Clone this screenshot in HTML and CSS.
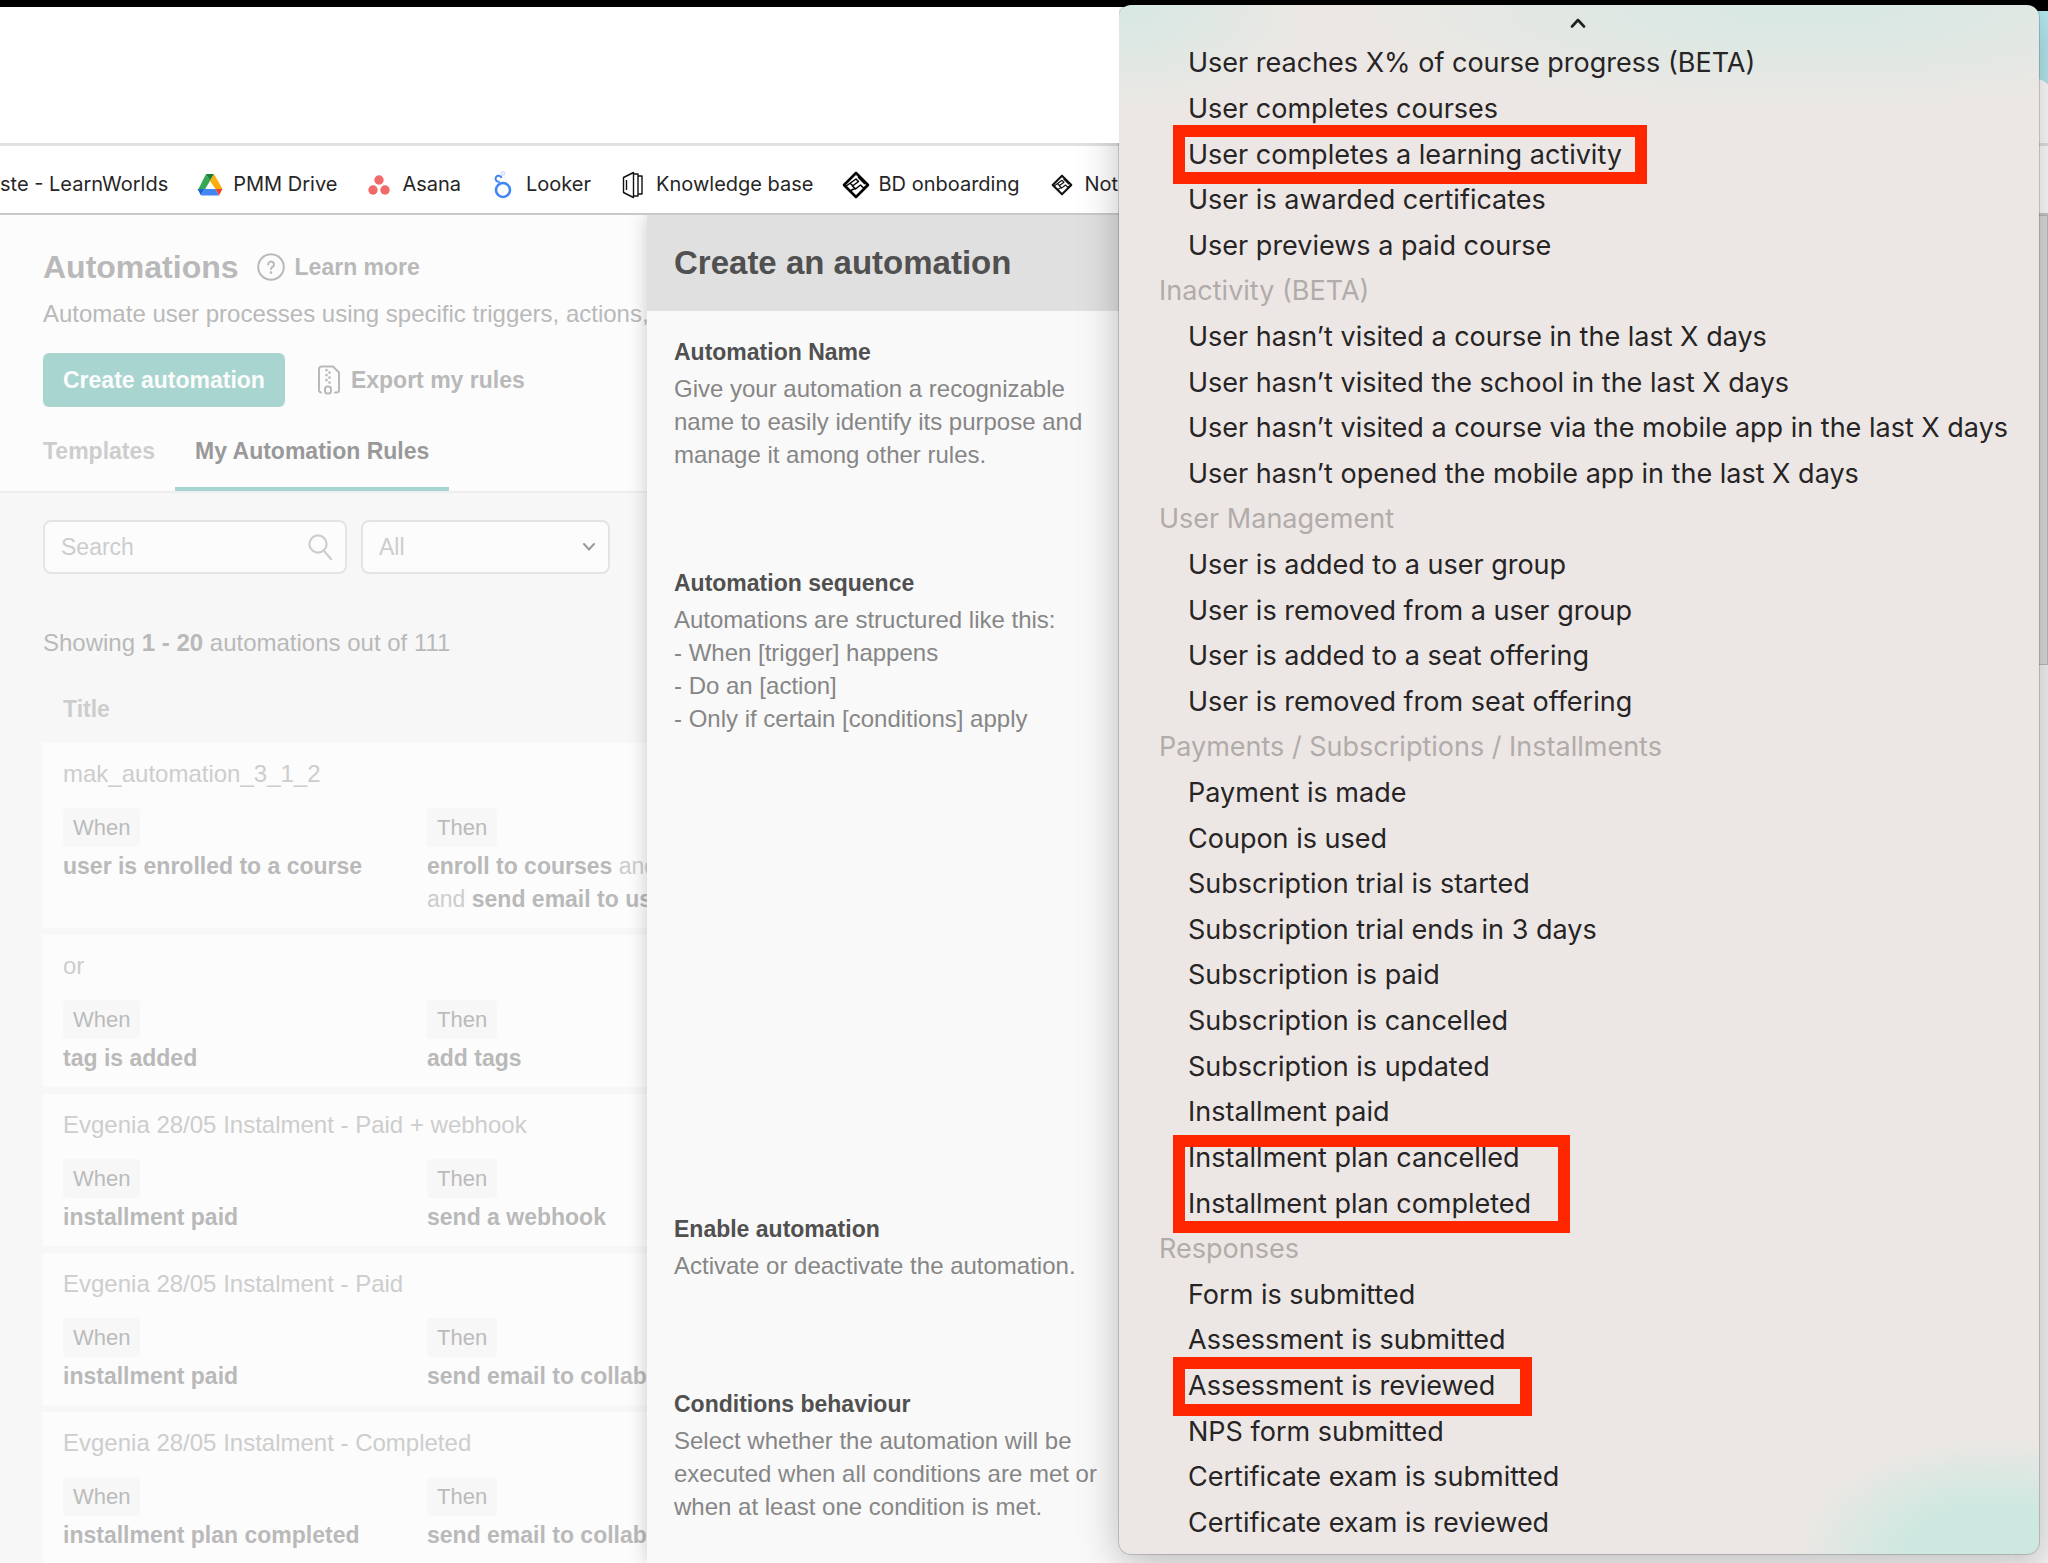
FILE: index.html
```html
<!DOCTYPE html>
<html lang="en">
<head>
<meta charset="utf-8">
<meta name="viewport" content="width=device-width, initial-scale=1">
<title>Automations</title>
<link rel="stylesheet" href="styles.css">
</head>
<body>
<div class="screen">
  <div class="bezel"></div>
  <div class="desktop-edge"></div>
  <div class="toolbar"></div>
  <nav class="bookmarks" aria-label="Bookmarks">
    <a class="bookmark" href="#">ste - LearnWorlds</a>
    <a class="bookmark" href="#">
      <svg class="bookmark-icon" viewBox="0 0 28 28" aria-hidden="true">
        <path d="M10 3l4 7-5.500 9H2z" fill="#34a853"/>
        <path d="M10 3h8l-4 7z" fill="#188038"/>
        <path d="M18 3l8.500 15h-7L14 10z" fill="#fbad0c"/>
        <path d="M1.500 18h7l-3.500 6.500z" fill="#1967d2"/>
        <path d="M8.500 18h11l3.500 6.500H5z" fill="#4285f4"/>
        <path d="M19.500 18h7L23 24.500z" fill="#ea4335"/>
      </svg>
      PMM Drive</a>
    <a class="bookmark" href="#">
      <svg class="bookmark-icon" viewBox="0 0 28 28" aria-hidden="true" fill="#f06a6a">
        <circle cx="14" cy="9" r="4.700"/><circle cx="8" cy="19" r="4.700"/><circle cx="20" cy="19" r="4.700"/>
      </svg>
      Asana</a>
    <a class="bookmark" href="#">
      <svg class="bookmark-icon" viewBox="0 0 28 28" aria-hidden="true" fill="none" stroke="#4285f4">
        <circle cx="14" cy="19" r="7" stroke-width="2.600"/>
        <path d="M10.500 10.500A3 3 0 1 1 12.500 7" stroke-width="2"/>
        <circle cx="14" cy="2.500" r="1.600" stroke="#c9dcfb" stroke-width="1.400"/>
      </svg>
      Looker</a>
    <a class="bookmark" href="#">
      <svg class="bookmark-icon" viewBox="0 0 28 28" aria-hidden="true" fill="none" stroke="#111" stroke-width="1.400" stroke-linejoin="round">
        <path d="M4.500 6.500l10-5v25l-10-5z"/><path d="M14.500 3h4.500v22h-4.500M19 5h4v18h-4"/><path d="M7.500 9v10"/>
      </svg>
      Knowledge base</a>
    <a class="bookmark" href="#">
      <svg class="bookmark-icon" viewBox="0 0 28 28" aria-hidden="true" fill="none" stroke="#000" stroke-width="2.600" stroke-linejoin="round">
        <path d="M14 2l12 12-12 12L2 14z"/>
        <path d="M3.500 15.500L14 8l2.500 2.500-6 4.500 3 3 5-4 3 3 4-3M16 6l7 7M8 12l3 3M8 20l5.500-3" stroke-width="1.500"/>
      </svg>
      BD onboarding</a>
    <a class="bookmark" href="#">
      <svg class="bookmark-icon" viewBox="-4 -4 36 36" aria-hidden="true" fill="none" stroke="#111" stroke-width="2.600" stroke-linejoin="round">
        <path d="M14 2l12 12-12 12L2 14z"/>
        <path d="M3.500 15.500L14 8l2.500 2.500-6 4.500 3 3 5-4 3 3 4-3M16 6l7 7M8 12l3 3M8 20l5.500-3" stroke-width="1.500"/>
      </svg>
      Not</a>
  </nav>

  <div class="workspace">
    <main class="page">
      <header class="page-head">
        <div class="title-row">
          <h1>Automations</h1>
          <a class="learn" href="#">
            <svg class="learn-icon" viewBox="0 0 28 28" aria-hidden="true" fill="none" stroke="currentColor" stroke-width="2" stroke-linecap="round">
              <circle cx="14" cy="14" r="12.800"/>
              <path d="M11.200 11.500a2.900 2.900 0 1 1 4.500 2.400c-1 .7-1.700 1-1.700 2.100"/><path d="M14 19.500v.1" stroke-width="2.600"/>
            </svg>
            Learn more</a>
        </div>
        <p class="intro">Automate user processes using specific triggers, actions,</p>
        <div class="actions">
          <button class="primary" type="button">Create automation</button>
          <button class="export" type="button">
            <svg class="export-icon" viewBox="0 0 24 30" aria-hidden="true" fill="none" stroke="currentColor" stroke-width="2" stroke-linecap="round" stroke-linejoin="round">
              <path d="M4 27.500a2.500 2.500 0 0 1-2-2.500V4a2.500 2.500 0 0 1 2.500-2.500H16l6 6V25a2.500 2.500 0 0 1-2.500 2.500H18"/>
              <rect x="8" y="21.500" width="6" height="7" rx="2.500"/>
              <path d="M9.500 5v.1M12.500 7.500v.1M9.500 10v.1M12.500 12.500v.1M9.500 15v.1M12.500 17.500v.1" stroke-width="2.600"/>
            </svg>
            Export my rules</button>
        </div>
        <nav class="tabs" aria-label="Sections">
          <a class="tab" href="#">Templates</a>
          <a class="tab tab-current" href="#" aria-current="page">My Automation Rules</a>
        </nav>
      </header>

      <section class="rules">
        <form class="filters">
          <label class="search">
            <input type="search" placeholder="Search" aria-label="Search">
            <svg class="search-icon" viewBox="0 0 24 28" aria-hidden="true" fill="none" stroke="currentColor" stroke-width="2.200" stroke-linecap="round">
              <circle cx="10" cy="11" r="8.600"/><path d="M16 18l7 8"/>
            </svg>
          </label>
          <label class="filter">
            <select aria-label="Filter"><option>All</option></select>
            <svg class="filter-icon" viewBox="0 0 12 8" aria-hidden="true" fill="none" stroke="currentColor" stroke-width="2" stroke-linecap="round"><path d="M1 1l5 5.500L11 1"/></svg>
          </label>
        </form>
        <p class="count">Showing <b>1 - 20</b> automations out of 111</p>
        <table class="rule-table">
          <thead><tr><th scope="col">Title</th></tr></thead>
          <tbody>
            <tr><td><span class="rule-name">mak_automation_3_1_2</span>
              <div class="rule-parts">
                <div><span class="tag">When</span><p class="step"><b>user is enrolled to a course</b></p></div>
                <div><span class="tag">Then</span><p class="step"><b>enroll to courses</b> and<br>and <b>send email to us</b></p></div>
              </div></td></tr>
            <tr><td><span class="rule-name">or</span>
              <div class="rule-parts">
                <div><span class="tag">When</span><p class="step"><b>tag is added</b></p></div>
                <div><span class="tag">Then</span><p class="step"><b>add tags</b></p></div>
              </div></td></tr>
            <tr><td><span class="rule-name">Evgenia 28/05 Instalment - Paid + webhook</span>
              <div class="rule-parts">
                <div><span class="tag">When</span><p class="step"><b>installment paid</b></p></div>
                <div><span class="tag">Then</span><p class="step"><b>send a webhook</b></p></div>
              </div></td></tr>
            <tr><td><span class="rule-name">Evgenia 28/05 Instalment - Paid</span>
              <div class="rule-parts">
                <div><span class="tag">When</span><p class="step"><b>installment paid</b></p></div>
                <div><span class="tag">Then</span><p class="step"><b>send email to collab</b></p></div>
              </div></td></tr>
            <tr><td><span class="rule-name">Evgenia 28/05 Instalment - Completed</span>
              <div class="rule-parts">
                <div><span class="tag">When</span><p class="step"><b>installment plan completed</b></p></div>
                <div><span class="tag">Then</span><p class="step"><b>send email to collab</b></p></div>
              </div></td></tr>
          </tbody>
        </table>
      </section>
    </main>

    <aside class="drawer">
      <header class="drawer-head"><h2>Create an automation</h2></header>
      <div class="drawer-body">
        <section class="field field-name">
          <h3>Automation Name</h3>
          <p>Give your automation a recognizable name to easily identify its purpose and manage it among other rules.</p>
        </section>
        <section class="field field-sequence">
          <h3>Automation sequence</h3>
          <p>Automations are structured like this:<br>- When [trigger] happens<br>- Do an [action]<br>- Only if certain [conditions] apply</p>
        </section>
        <section class="field field-enable">
          <h3>Enable automation</h3>
          <p>Activate or deactivate the automation.</p>
        </section>
        <section class="field">
          <h3>Conditions behaviour</h3>
          <p>Select whether the automation will be executed when all conditions are met or when at least one condition is met.</p>
        </section>
      </div>
    </aside>
    <div class="scroll-track"><div class="scroll-thumb"></div></div>
  </div>

  <div class="menu">
    <div class="menu-more">
      <svg class="menu-chevron" viewBox="0 0 16 10" aria-hidden="true" fill="none" stroke="#222" stroke-width="2.600" stroke-linecap="round" stroke-linejoin="round"><path d="M2 8.500L8 2l6 6.500"/></svg>
    </div>
    <ul class="menu-list" role="listbox" aria-label="Trigger">
      <li role="option">User reaches X% of course progress (BETA)</li>
      <li role="option">User completes courses</li>
      <li role="option">User completes a learning activity<span class="mark mark-activity"></span></li>
      <li role="option">User is awarded certificates</li>
      <li role="option">User previews a paid course</li>
      <li class="menu-group" role="presentation">Inactivity (BETA)</li>
      <li role="option">User hasn’t visited a course in the last X days</li>
      <li role="option">User hasn’t visited the school in the last X days</li>
      <li role="option">User hasn’t visited a course via the mobile app in the last X days</li>
      <li role="option">User hasn’t opened the mobile app in the last X days</li>
      <li class="menu-group" role="presentation">User Management</li>
      <li role="option">User is added to a user group</li>
      <li role="option">User is removed from a user group</li>
      <li role="option">User is added to a seat offering</li>
      <li role="option">User is removed from seat offering</li>
      <li class="menu-group" role="presentation">Payments / Subscriptions / Installments</li>
      <li role="option">Payment is made</li>
      <li role="option">Coupon is used</li>
      <li role="option">Subscription trial is started</li>
      <li role="option">Subscription trial ends in 3 days</li>
      <li role="option">Subscription is paid</li>
      <li role="option">Subscription is cancelled</li>
      <li role="option">Subscription is updated</li>
      <li role="option">Installment paid</li>
      <li role="option">Installment plan cancelled<span class="mark mark-plans"></span></li>
      <li role="option">Installment plan completed</li>
      <li class="menu-group" role="presentation">Responses</li>
      <li role="option">Form is submitted</li>
      <li role="option">Assessment is submitted</li>
      <li role="option">Assessment is reviewed<span class="mark mark-reviewed"></span></li>
      <li role="option">NPS form submitted</li>
      <li role="option">Certificate exam is submitted</li>
      <li role="option">Certificate exam is reviewed</li>
    </ul>
  </div>
</div>
</body>
</html>
```

FILE: styles.css
```css
* { box-sizing: border-box; }

body {
  margin: 0;
  font-family: "Liberation Sans", Arial, sans-serif;
  font-size: 24px;
  line-height: 33px;
  color: #868686;
}

h1, h2, h3, p, ul { margin: 0; padding: 0; }
a { color: inherit; text-decoration: none; }
svg { flex: none; display: block; }
button, input, select { font: inherit; color: inherit; }

.screen {
  position: relative;
  height: 100vh;
  overflow: hidden;
  display: flex;
  flex-direction: column;
  background: #fff;
}

/* Browser chrome */
.bezel { flex: none; height: 7px; background: #000; }

.toolbar {
  flex: none;
  position: relative;
  z-index: 3;
  width: calc(100% - 929px);
  height: 136px;
  background: #fff;
}

.desktop-edge {
  position: absolute;
  top: 0;
  right: 0;
  width: 60px;
  height: 144px;
  border-top: 11px solid #000;
  background: #b4e8f0;
  overflow: hidden;
}
.desktop-edge::after {
  content: "";
  position: absolute;
  inset: 68px -4px 0 0;
  border-top-right-radius: 16px;
  background: #fff;
}

.bookmarks {
  flex: none;
  position: relative;
  display: flex;
  align-items: center;
  gap: 28px;
  height: 72px;
  padding-top: 10px;
  border-top: 3px solid #e1e1e1;
  border-bottom: 2px solid #c9c9c9;
  background: #fff;
  font-family: Inter, sans-serif;
  font-size: 20px;
  color: #262626;
  white-space: nowrap;
}

.bookmark { display: flex; align-items: center; gap: 9px; }
.bookmark-icon { width: 28px; height: 28px; }

.workspace {
  flex: 1;
  min-height: 0;
  display: grid;
  grid-template-columns: minmax(0, 647px) minmax(0, 1fr) 33px;
}

/* Automations page, faded behind the drawer */
.page {
  min-width: 0;
  overflow: hidden;
  background: #f7f7f7;
  color: #b9b9b9;
  white-space: nowrap;
}

.page-head {
  padding: 32px 0 0 43px;
  background: #fcfcfc;
  border-bottom: 2px solid #eee;
}

.title-row { display: flex; align-items: center; gap: 18px; height: 40px; }
h1 { font-size: 32px; line-height: 40px; }

.learn, .export {
  display: flex;
  align-items: center;
  gap: 10px;
  font-size: 23px;
  font-weight: bold;
}
.learn-icon { width: 28px; height: 28px; }
.intro { margin-top: 10px; }

.actions { display: flex; align-items: center; gap: 32px; margin-top: 23px; }
button { border: 0; background: none; padding: 0; }
.primary {
  height: 54px;
  padding: 0 20px;
  border-radius: 6px;
  background: #a8d5cf;
  color: #fcfcfc;
  font-size: 23px;
  font-weight: bold;
}
.export-icon { width: 24px; height: 30px; }

.tabs { display: flex; gap: 20px; margin-top: 28px; font-size: 23px; font-weight: bold; }
.tab { height: 56px; color: #cdcdcd; }
.tab-current { padding: 0 20px; color: #999; border-bottom: 4px solid #a8d5cf; }

.rules { padding: 27px 0 0 43px; }
.filters { display: flex; gap: 14px; padding-right: 37px; font-size: 23px; color: #cdcdcd; }
.search, .filter {
  display: flex;
  align-items: center;
  height: 54px;
  padding: 0 13px 0 16px;
  border: 2px solid #e4e4e4;
  border-radius: 8px;
  background: #fcfcfc;
}
.search { flex: 1; min-width: 0; }
.filter { flex: none; width: 249px; }
.search input, .filter select {
  flex: 1;
  min-width: 0;
  padding: 0;
  border: 0;
  outline: 0;
  background: none;
  appearance: none;
}
.search input::placeholder { color: inherit; opacity: 1; }
.search-icon { width: 24px; height: 28px; }
.filter-icon { width: 12px; height: 8px; color: #999; }

.count { margin-top: 52px; }

.rule-table { width: 100%; margin-top: 23px; border-collapse: separate; border-spacing: 0 7px; }
.rule-table th { padding: 4px 20px 10px; text-align: left; font-size: 23px; color: #cdcdcd; }
.rule-table td { padding: 14px 0 12px 20px; background: #fcfcfc; color: #cdcdcd; }
.rule-name { display: block; }
.rule-parts { display: grid; grid-template-columns: 364px minmax(0, 1fr); margin-top: 18px; }
.tag {
  display: block;
  width: max-content;
  padding: 3px 10px;
  border-radius: 4px;
  background: #f7f7f7;
  color: #bbb;
  font-size: 22px;
}
.step { margin-top: 3px; font-size: 23px; }
.step b { color: #b9b9b9; }

/* Drawer */
.drawer {
  position: relative;
  background: #f9f9f9;
  box-shadow: 0 0 18px rgba(0, 0, 0, .2);
  clip-path: inset(0 0 0 -30px);
}
.drawer-head { padding: 28px 27px; background: #e0e0e0; }
h2 { font-size: 33px; line-height: 40px; color: #505050; }
.drawer-body { width: 470px; padding: 25px 20px 0 27px; }
.field h3 { font-size: 23px; color: #505050; }
.field p { margin-top: 3px; }
.field-name { margin-bottom: 96px; }
.field-sequence { margin-bottom: 478px; }
.field-enable { margin-bottom: 106px; }

.scroll-track { background: #f4f4f4; border-top: 1px solid #bbb; }
.scroll-thumb { height: 449px; background: #dcdcdc; border-bottom: 1px solid #bbb; border-right: 1px solid #bbb; }

/* Trigger menu, open over the drawer */
.menu {
  position: absolute;
  z-index: 2;
  top: 5px;
  right: 9px;
  bottom: 9px;
  width: 920px;
  display: flex;
  flex-direction: column;
  padding-bottom: 9px;
  border-radius: 12px;
  background:
    radial-gradient(ellipse 200px 116px at 95% 100%, #cce8e0 40%, rgba(204, 232, 224, 0) 100%),
    radial-gradient(ellipse 480px 110px at 75% 0, #d8e8e3 10%, rgba(216, 232, 227, 0) 100%),
    radial-gradient(ellipse 200px 110px at 0 0, #d8e8e3 10%, rgba(216, 232, 227, 0) 100%),
    #ece7e4;
  box-shadow: 0 0 0 1px rgba(0, 0, 0, .16), 0 10px 40px rgba(0, 0, 0, .25);
  font-family: Inter, sans-serif;
  font-size: 27px;
  color: #262424;
  white-space: nowrap;
}
.menu-more { flex: none; display: flex; justify-content: center; height: 35px; padding: 13px 2px 0 0; }
.menu-chevron { width: 16px; height: 10px; }
.menu-list { flex: 1; display: flex; flex-direction: column; list-style: none; }
.menu-list li { flex: 1 1 0; position: relative; display: flex; align-items: center; padding-left: 69px; }
.menu-list .menu-group { padding-left: 40px; color: #b1acaa; }

/* Highlight frames drawn over menu entries */
.mark { position: absolute; top: -6px; left: 54px; height: 59px; border: 12px solid #ff2600; }
.mark-activity { width: 474px; }
.mark-plans { top: 0; width: 397px; height: 98px; z-index: 1; }
.mark-reviewed { width: 359px; }
```
